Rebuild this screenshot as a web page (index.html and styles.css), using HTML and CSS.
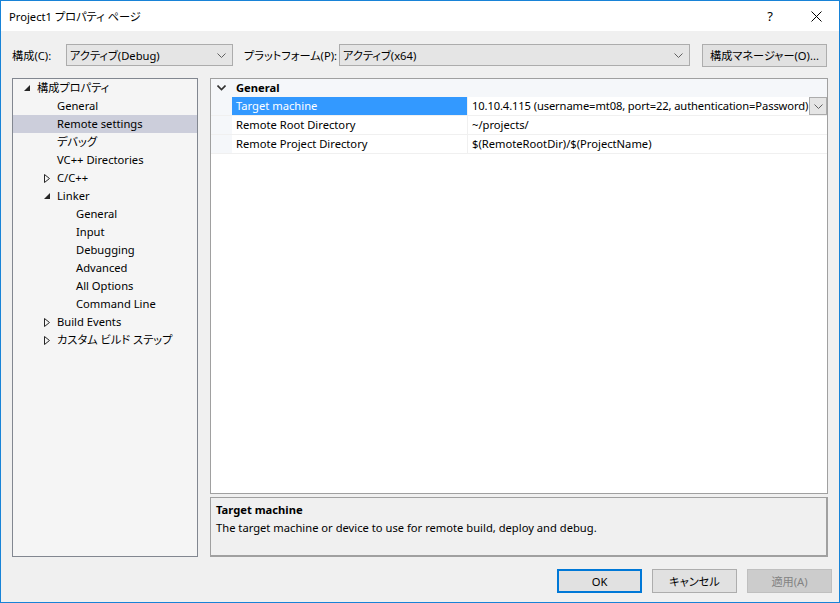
FILE: index.html
```html
<!DOCTYPE html>
<html lang="ja">
<head>
    <meta charset="UTF-8">
    <title>Project1 プロパティ ページ</title>
    <link rel="stylesheet" href="styles.css">
</head>
<body>
    <div class="window">
        <!-- Title bar -->
        <div class="titlebar">
            <span class="title">Project1 プロパティ ページ</span>
            <span class="help">?</span>
            <span class="close">
                <svg width="11" height="11" viewBox="0 0 11 11"><path d="M0.5 0.5 L10.5 10.5 M10.5 0.5 L0.5 10.5" stroke="#000" stroke-width="1" fill="none"/></svg>
            </span>
        </div>

        <!-- Configuration row -->
        <div class="toolbar">
            <label class="lbl-config">構成(C):</label>
            <div class="combo combo-config">
                <span>アクティブ(Debug)</span>
                <svg class="chev" width="9" height="5" viewBox="0 0 9 5"><path d="M0.5 0.5 L4.5 4.5 L8.5 0.5" stroke="#606060" fill="none"/></svg>
            </div>
            <label class="lbl-platform">プラットフォーム(P):</label>
            <div class="combo combo-platform">
                <span>アクティブ(x64)</span>
                <svg class="chev" width="9" height="5" viewBox="0 0 9 5"><path d="M0.5 0.5 L4.5 4.5 L8.5 0.5" stroke="#606060" fill="none"/></svg>
            </div>
            <button class="btn btn-manager">構成マネージャー(O)...</button>
        </div>

        <div class="main">
            <!-- Tree -->
            <div class="tree">
                <div class="node lvl0"><span class="arrow"><svg width="7" height="7" viewBox="0 0 7 7"><path d="M6 0 L6 6 L0 6 Z" fill="#262626"/></svg></span>構成プロパティ</div>
                <div class="node lvl1"><span class="arrow"></span>General</div>
                <div class="node lvl1 selected"><span class="arrow"></span>Remote settings</div>
                <div class="node lvl1"><span class="arrow"></span>デバッグ</div>
                <div class="node lvl1"><span class="arrow"></span>VC++ Directories</div>
                <div class="node lvl1"><span class="arrow"><svg width="6" height="9" viewBox="0 0 6 9"><path d="M0.5 0.5 L5.5 4.5 L0.5 8.5 Z" stroke="#262626" fill="none"/></svg></span>C/C++</div>
                <div class="node lvl1"><span class="arrow"><svg width="7" height="7" viewBox="0 0 7 7"><path d="M6 0 L6 6 L0 6 Z" fill="#262626"/></svg></span>Linker</div>
                <div class="node lvl2">General</div>
                <div class="node lvl2">Input</div>
                <div class="node lvl2">Debugging</div>
                <div class="node lvl2">Advanced</div>
                <div class="node lvl2">All Options</div>
                <div class="node lvl2">Command Line</div>
                <div class="node lvl1"><span class="arrow"><svg width="6" height="9" viewBox="0 0 6 9"><path d="M0.5 0.5 L5.5 4.5 L0.5 8.5 Z" stroke="#262626" fill="none"/></svg></span>Build Events</div>
                <div class="node lvl1"><span class="arrow"><svg width="6" height="9" viewBox="0 0 6 9"><path d="M0.5 0.5 L5.5 4.5 L0.5 8.5 Z" stroke="#262626" fill="none"/></svg></span>カスタム ビルド ステップ</div>
            </div>

            <div class="right">
                <!-- Property grid -->
                <div class="grid">
                    <div class="grid-head">
                        <span class="gutter"><svg width="9" height="6" viewBox="0 0 9 6"><path d="M0.5 0.5 L4.5 4.5 L8.5 0.5" stroke="#333" stroke-width="1.6" fill="none"/></svg></span>
                        <span class="cat">General</span>
                    </div>
                    <div class="prop">
                        <span class="gutter"></span>
                        <span class="name sel">Target machine</span>
                        <span class="value value-tight">10.10.4.115 (username=mt08, port=22, authentication=Password)</span>
                        <span class="drop"><svg width="9" height="5" viewBox="0 0 9 5"><path d="M0.5 0.5 L4.5 4.5 L8.5 0.5" stroke="#606060" fill="none"/></svg></span>
                    </div>
                    <div class="prop">
                        <span class="gutter"></span>
                        <span class="name">Remote Root Directory</span>
                        <span class="value">~/projects/</span>
                    </div>
                    <div class="prop">
                        <span class="gutter"></span>
                        <span class="name">Remote Project Directory</span>
                        <span class="value">$(RemoteRootDir)/$(ProjectName)</span>
                    </div>
                </div>

                <!-- Description -->
                <div class="desc">
                    <div class="desc-title">Target machine</div>
                    <div class="desc-text">The target machine or device to use for remote build, deploy and debug.</div>
                </div>
            </div>
        </div>

        <!-- Dialog buttons -->
        <div class="footer">
            <button class="btn btn-ok">OK</button>
            <button class="btn">キャンセル</button>
            <button class="btn btn-disabled">適用(A)</button>
        </div>
    </div>
</body>
</html>
```

FILE: styles.css
```css
* {
    margin: 0;
    padding: 0;
    box-sizing: border-box;
}

body {
    font-family: "Noto Sans", "Noto Sans CJK JP", sans-serif;
    font-size: 11.2px;
    font-feature-settings: "palt";
    color: #000;
    background: #f0f0f0;
}

.window {
    width: 840px;
    height: 603px;
    border: 1px solid #1883d7;
    background: #f0f0f0;
    display: flex;
    flex-direction: column;
}

/* Title bar */
.titlebar {
    height: 30px;
    background: #fff;
    display: flex;
    align-items: center;
    padding-left: 8px;
}

.title {
    flex: 1;
}

.help {
    width: 46px;
    text-align: center;
    font-size: 13px;
}

.close {
    width: 46px;
    display: flex;
    justify-content: center;
}

/* Toolbar */
.toolbar {
    display: flex;
    align-items: center;
    height: 22px;
    margin-top: 13px;
    padding-left: 11px;
    white-space: nowrap;
}

.lbl-config {
    width: 54px;
}

.lbl-platform {
    margin-left: 11px;
    width: 95px;
}

.combo {
    height: 22px;
    background: #e5e5e5;
    border: 1px solid #acacac;
    display: flex;
    align-items: center;
    padding-left: 3px;
    padding-right: 6px;
}

.combo span {
    flex: 1;
}

.combo-config {
    width: 167px;
}

.combo-platform {
    width: 351px;
}

.btn {
    font-family: inherit;
    font-size: 11.2px;
    font-feature-settings: "palt";
    background: #e1e1e1;
    border: 1px solid #adadad;
    color: #000;
    height: 24px;
}

.btn-manager {
    width: 125px;
    height: 23px;
    margin-left: 12px;
}

/* Main area */
.main {
    display: flex;
    margin-top: 12px;
    padding-left: 11px;
    height: 479px;
}

.tree {
    width: 186px;
    background: #f5f5f5;
    border: 1px solid #828790;
}

.node {
    height: 18px;
    line-height: 18px;
    display: flex;
    align-items: center;
    white-space: nowrap;
}

.node.selected {
    background: #cccedb;
}

.arrow {
    width: 13px;
    display: flex;
    align-items: center;
}

.lvl0 {
    padding-left: 11px;
}

.lvl1 {
    padding-left: 31px;
}

.lvl2 {
    padding-left: 63px;
}

.right {
    width: 618px;
    margin-left: 12px;
    display: flex;
    flex-direction: column;
}

/* Property grid */
.grid {
    height: 416px;
    background: #fff;
    border: 1px solid #a0a0a0;
}

.grid-head,
.prop {
    display: flex;
    white-space: nowrap;
}

.grid-head {
    height: 18px;
    line-height: 18px;
    background: #f5f7fa;
}

.gutter {
    width: 21px;
    flex-shrink: 0;
    background: #f5f7fa;
    display: flex;
    align-items: center;
    justify-content: center;
}

.cat {
    font-weight: bold;
    padding-left: 4px;
}

.prop {
    height: 19px;
    line-height: 18px;
    border-bottom: 1px solid #f0f0f0;
}

.name {
    width: 236px;
    flex-shrink: 0;
    padding-left: 4px;
    border-right: 1px solid #f0f0f0;
}

.name.sel {
    background: #3399ff;
    color: #fff;
}

.value {
    flex: 1;
    padding-left: 4px;
    overflow: hidden;
}

.value-tight {
    letter-spacing: -0.12px;
}

.drop {
    width: 18px;
    height: 18px;
    flex-shrink: 0;
    background: #e5e5e5;
    border: 1px solid #acacac;
    display: flex;
    align-items: center;
    justify-content: center;
}

/* Description */
.desc {
    margin-top: 3px;
    height: 60px;
    border: 1px solid #a0a0a0;
    border-right-width: 2px;
    border-bottom-width: 2px;
    padding: 3px 5px;
}

.desc-title {
    font-weight: bold;
    line-height: 18px;
}

.desc-text {
    line-height: 18px;
}

/* Footer */
.footer {
    display: flex;
    justify-content: flex-end;
    gap: 10px;
    padding-right: 7px;
    margin-top: 12px;
}

.footer .btn {
    width: 85px;
}

.btn-ok {
    border: 2px solid #0078d7;
}

.btn-disabled {
    background: #cccccc;
    border-color: #bfbfbf;
    color: #838383;
}
```
